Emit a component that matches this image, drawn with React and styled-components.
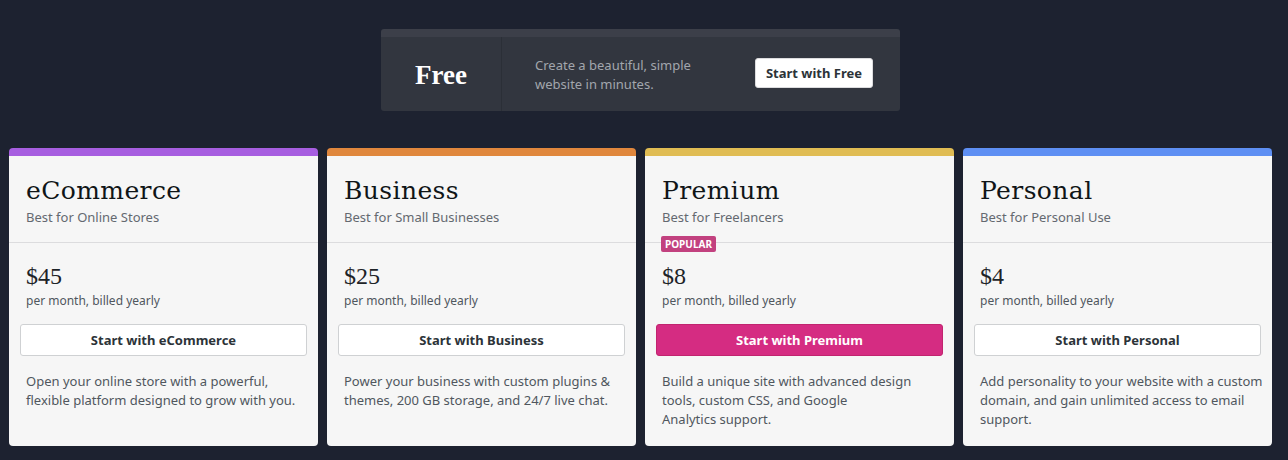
import styled, { createGlobalStyle } from "styled-components";

const GlobalStyle = createGlobalStyle`
  body {
    margin: 0;
    background: #1d2230;
    font-family: "Noto Sans", "Open Sans", sans-serif;
  }
`;

// description lines are split where the reference wraps them
const plans = [
  {
    name: "eCommerce",
    tag: "Best for Online Stores",
    price: "$45",
    color: "#a75ee0",
    text: ["Open your online store with a powerful,", "flexible platform designed to grow with you."],
  },
  {
    name: "Business",
    tag: "Best for Small Businesses",
    price: "$25",
    color: "#e0873d",
    text: ["Power your business with custom plugins &", "themes, 200 GB storage, and 24/7 live chat."],
  },
  {
    name: "Premium",
    tag: "Best for Freelancers",
    price: "$8",
    color: "#e0bc53",
    popular: true,
    text: ["Build a unique site with advanced design", "tools, custom CSS, and Google", "Analytics support."],
  },
  {
    name: "Personal",
    tag: "Best for Personal Use",
    price: "$4",
    color: "#5e8ff3",
    text: ["Add personality to your website with a custom", "domain, and gain unlimited access to email", "support."],
  },
];

const App = () => {
  return (
    <>
      <GlobalStyle />
      <Page>
        <FreeBar>
          <FreeName>Free</FreeName>
          <FreeBody>
            <FreeText>
              Create a beautiful, simple
              <br />
              website in minutes.
            </FreeText>
            <FreeButton>Start with Free</FreeButton>
          </FreeBody>
        </FreeBar>
        <Grid>
          {plans.map((p) => (
            <Card key={p.name} $accent={p.color}>
              <Header>
                <Title>{p.name}</Title>
                <Tagline>{p.tag}</Tagline>
                {p.popular && <Badge>Popular</Badge>}
              </Header>
              <Body>
                <Price>{p.price}</Price>
                <Period>per month, billed yearly</Period>
                <PlanButton $primary={p.popular}>Start with {p.name}</PlanButton>
                <Description>
                  {p.text.map((line, i) => (
                    <Line key={i}>{line}</Line>
                  ))}
                </Description>
              </Body>
            </Card>
          ))}
        </Grid>
      </Page>
    </>
  );
};

const Page = styled.div`
  width: 1288px;
  height: 460px;
  padding-top: 29px;
  box-sizing: border-box;
`;

const FreeBar = styled.div`
  width: 519px;
  height: 82px;
  margin-left: 381px;
  box-sizing: border-box;
  display: flex;
  background: #32363f;
  border-top: 8px solid #3c3f49;
  border-radius: 3px;
`;

const FreeName = styled.div`
  width: 120px;
  border-right: 1px solid #2b2f37;
  display: flex;
  align-items: center;
  justify-content: center;
  font-family: "Liberation Serif", "DejaVu Serif", serif;
  font-weight: 700;
  font-size: 27px;
  color: #fff;
  padding-top: 3px;
`;

const FreeBody = styled.div`
  flex: 1;
  display: flex;
  align-items: center;
  justify-content: space-between;
  padding: 0 27px 0 33px;
`;

const FreeText = styled.div`
  font-size: 13px;
  line-height: 19px;
  color: #a2a6ad;
  padding-top: 2px;
`;

const FreeButton = styled.button`
  height: 30px;
  padding: 0 10px;
  margin-bottom: 2px;
  background: #fff;
  border: 1px solid #dcdcde;
  border-radius: 3px;
  font-family: "Noto Sans", sans-serif;
  font-weight: 700;
  font-size: 13px;
  color: #2c3338;
`;

const Grid = styled.div`
  display: grid;
  grid-template-columns: repeat(4, 309px);
  gap: 9px;
  padding: 37px 0 0 9px;
`;

const Card = styled.div`
  height: 298px;
  box-sizing: border-box;
  background: #f6f6f6;
  border-top: 8px solid ${(p) => p.$accent};
  border-radius: 4px;
  display: flex;
  flex-direction: column;
`;

const Header = styled.div`
  position: relative;
  height: 87px;
  box-sizing: border-box;
  padding: 20px 17px 0;
  border-bottom: 1px solid #dcdcde;
`;

const Title = styled.div`
  font-family: "DejaVu Serif", "Liberation Serif", serif;
  font-size: 25px;
  line-height: 30px;
  letter-spacing: 0.4px;
  color: #101517;
`;

const Tagline = styled.div`
  margin-top: 2px;
  font-size: 13px;
  line-height: 18px;
  color: #646970;
`;

const Badge = styled.span`
  position: absolute;
  left: 16px;
  bottom: -10px;
  background: #c2417f;
  color: #fff;
  font-size: 10px;
  font-weight: 700;
  line-height: 16px;
  padding: 0 4px;
  border-radius: 2px;
  text-transform: uppercase;
`;

const Body = styled.div`
  padding: 19px 11px 0;
`;

const Price = styled.div`
  padding: 0 6px;
  font-family: "Liberation Serif", "DejaVu Serif", serif;
  font-size: 24px;
  line-height: 28px;
  color: #1d2327;
`;

const Period = styled.div`
  padding: 0 6px;
  margin-top: 2px;
  font-size: 12px;
  line-height: 17px;
  color: #50575e;
`;

const PlanButton = styled.button`
  display: block;
  width: 100%;
  height: 32px;
  margin-top: 15px;
  background: ${(p) => (p.$primary ? "#d52c82" : "#fff")};
  border: 1px solid ${(p) => (p.$primary ? "#c1246f" : "#cfd1d3")};
  border-radius: 3px;
  font-family: "Noto Sans", sans-serif;
  font-weight: 700;
  font-size: 13px;
  color: ${(p) => (p.$primary ? "#fff" : "#2c3338")};
`;

const Description = styled.div`
  margin-top: 16px;
  padding-left: 6px;
  font-size: 13px;
  line-height: 19px;
  color: #50575e;
`;

const Line = styled.div`
  white-space: nowrap;
`;

export default App;
